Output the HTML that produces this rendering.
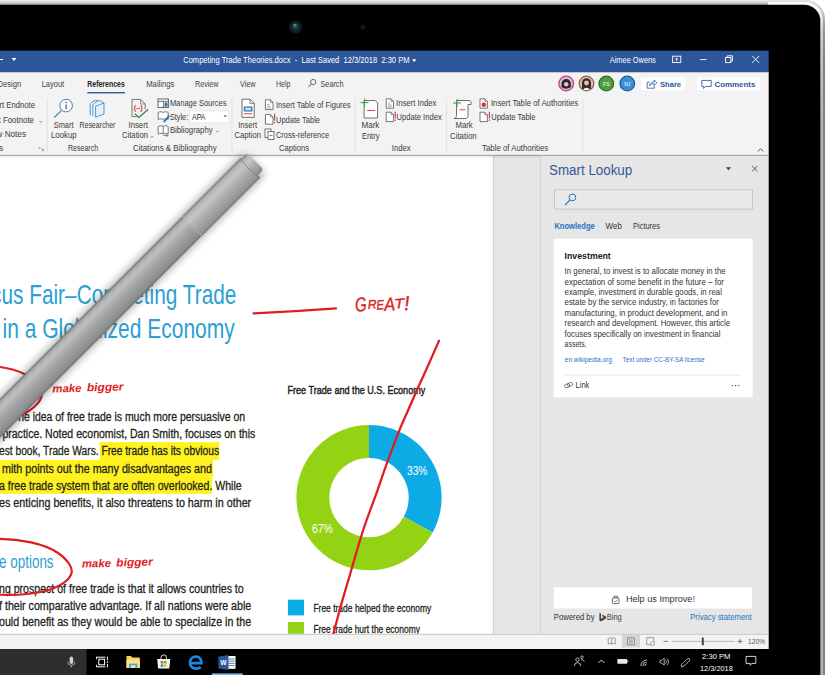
<!DOCTYPE html>
<html lang="en"><head><meta charset="utf-8"><title>Word - Smart Lookup</title>
<style>
html,body{margin:0;padding:0;background:#fff;}
body{width:825px;height:675px;overflow:hidden;}
svg{display:block;}
text{font-family:'Liberation Sans', sans-serif;}
</style></head><body>
<svg width="825" height="675" viewBox="0 0 825 675">
<defs>
<linearGradient id="topstrip" x1="0" y1="0" x2="0" y2="1"><stop offset="0" stop-color="#f0f0f0"/><stop offset="0.45" stop-color="#d2d2d2"/><stop offset="1" stop-color="#a6a6a6"/></linearGradient>
<linearGradient id="penbody" x1="0" y1="0" x2="0" y2="1">
<stop offset="0" stop-color="#6e6f71"/><stop offset="0.045" stop-color="#8f9092"/><stop offset="0.13" stop-color="#b3b4b6"/><stop offset="0.28" stop-color="#bebfc1"/><stop offset="0.45" stop-color="#aaabad"/><stop offset="0.7" stop-color="#98999b"/><stop offset="0.9" stop-color="#8b8c8e"/><stop offset="1" stop-color="#707173"/></linearGradient>
<linearGradient id="pencap" x1="0" y1="0" x2="0" y2="1">
<stop offset="0" stop-color="#7a7b7d"/><stop offset="0.05" stop-color="#9b9c9e"/><stop offset="0.15" stop-color="#bbbcbe"/><stop offset="0.32" stop-color="#c4c5c7"/><stop offset="0.5" stop-color="#b0b1b3"/><stop offset="0.75" stop-color="#9e9fa1"/><stop offset="0.92" stop-color="#909193"/><stop offset="1" stop-color="#757678"/></linearGradient>
<linearGradient id="rshadow" x1="0" y1="0" x2="0" y2="1"><stop offset="0" stop-color="#000" stop-opacity="0.10"/><stop offset="1" stop-color="#000" stop-opacity="0"/></linearGradient>
<linearGradient id="edgeL" gradientUnits="userSpaceOnUse" x1="0" y1="0" x2="0" y2="120"><stop offset="0" stop-color="#ffffff"/><stop offset="0.12" stop-color="#f2f2f2"/><stop offset="0.35" stop-color="#cfcfcf"/><stop offset="1" stop-color="#adadad"/></linearGradient>
<linearGradient id="edgeD" gradientUnits="userSpaceOnUse" x1="0" y1="0" x2="0" y2="60"><stop offset="0" stop-color="#e4e4e4"/><stop offset="0.2" stop-color="#c4c4c4"/><stop offset="0.5" stop-color="#949494"/><stop offset="1" stop-color="#808080"/></linearGradient>
<filter id="blur4" x="-20%" y="-100%" width="140%" height="300%"><feGaussianBlur stdDeviation="4"/></filter>
<filter id="blur2" x="-20%" y="-100%" width="140%" height="300%"><feGaussianBlur stdDeviation="2"/></filter>
<clipPath id="screen"><rect x="0" y="50.5" width="768.7" height="625"/></clipPath>
<clipPath id="docclip"><rect x="0" y="155" width="493" height="479"/></clipPath>
</defs>
<rect x="0.0" y="0.0" width="825.0" height="675.0" fill="#ffffff" />
<path d="M768,2.900 H804.200 A16.900,16.900 0 0 1 821.100,19.800 V675" fill="none" stroke="url(#edgeL)" stroke-width="2.600"/>
<path d="M768,0.700 H805 A18.800,18.800 0 0 1 823.800,19.500 V675" fill="none" stroke="url(#edgeD)" stroke-width="2.400"/>
<path d="M0,0 H768 V5 H0 Z" fill="url(#topstrip)"/>
<path d="M0,4.7 H804.3 A16,16 0 0 1 820.3,20.7 V675 H0 Z" fill="#000"/>
<circle cx="295.5" cy="27.2" r="6.6" fill="#14191b"/><circle cx="295.5" cy="27.2" r="4.2" fill="#0f2c2e"/><circle cx="295.2" cy="26" r="2.6" fill="#1f5557"/><circle cx="294.8" cy="25" r="1.1" fill="#5fa3a3"/>
<circle cx="362.9" cy="27.2" r="2.4" fill="#161616"/>
<rect x="0.0" y="50.7" width="768.7" height="21.5" fill="#2b579a" />
<rect x="0.0" y="72.2" width="768.7" height="83.0" fill="#f3f3f3" />
<line x1="0.0" y1="59.5" x2="3.0" y2="59.5" stroke="#fff" stroke-width="1" />
<path d="M11.5,58 h5 l-2.5,3 z" fill="#fff"/>
<text x="183.2" y="63.2" font-size="8.2" fill="#fff" textLength="226.3" lengthAdjust="spacingAndGlyphs">Competing Trade Theories.docx  -  Last Saved  12/3/2018  2:30 PM</text>
<path d="M412,59.3 h4.4 l-2.2,2.6 z" fill="#fff"/>
<text x="609.8" y="63.2" font-size="8.2" fill="#fff" textLength="46.0" lengthAdjust="spacingAndGlyphs">Aimee Owens</text>
<rect x="672.6" y="56.2" width="8.2" height="6.4" fill="none" stroke="#fff" stroke-width="0.9"/><path d="M676.7,61.5 v-3.4 m-1.6,1.5 l1.6,-1.6 l1.6,1.6" fill="none" stroke="#fff" stroke-width="0.8"/>
<line x1="700.0" y1="59.6" x2="706.4" y2="59.6" stroke="#fff" stroke-width="0.9" />
<rect x="725.6" y="57.4" width="5.2" height="5.2" fill="none" stroke="#fff" stroke-width="0.9"/><path d="M727.3,57.4 v-1.6 h5.2 v5.2 h-1.7" fill="none" stroke="#fff" stroke-width="0.9"/>
<path d="M752.2,55.9 l7,7 m0,-7 l-7,7" stroke="#fff" stroke-width="0.9" fill="none"/>
<text x="-2.5" y="87.0" font-size="8.4" fill="#444" textLength="23.8" lengthAdjust="spacingAndGlyphs">Design</text>
<text x="41.7" y="87.0" font-size="8.4" fill="#444" textLength="22.5" lengthAdjust="spacingAndGlyphs">Layout</text>
<text x="87.3" y="87.0" font-size="8.4" fill="#262626" textLength="37.5" lengthAdjust="spacingAndGlyphs" font-weight="bold">References</text>
<text x="146.2" y="87.0" font-size="8.4" fill="#444" textLength="28.3" lengthAdjust="spacingAndGlyphs">Mailings</text>
<text x="195.0" y="87.0" font-size="8.4" fill="#444" textLength="23.5" lengthAdjust="spacingAndGlyphs">Review</text>
<text x="240.0" y="87.0" font-size="8.4" fill="#444" textLength="15.6" lengthAdjust="spacingAndGlyphs">View</text>
<text x="276.0" y="87.0" font-size="8.4" fill="#444" textLength="14.5" lengthAdjust="spacingAndGlyphs">Help</text>
<rect x="87.3" y="92.0" width="37.7" height="1.4" fill="#2b579a" />
<circle cx="313.2" cy="82" r="2.6" fill="none" stroke="#444" stroke-width="0.8"/><path d="M311.3,84 l-3,3.2" stroke="#444" stroke-width="0.9"/>
<text x="320.5" y="87.0" font-size="8.4" fill="#444" textLength="23.0" lengthAdjust="spacingAndGlyphs">Search</text>
<circle cx="566.2" cy="83.5" r="7.3" fill="#c8c6d2" stroke="#d6338a" stroke-width="1.3"/><path d="M561.5,84 a4.7,5 0 0 1 9.4,0 v3 a8,8 0 0 1 -9.4,0 z" fill="#2a2230"/><circle cx="566.2" cy="84.3" r="2.3" fill="#e6c1ad"/>
<circle cx="586.5" cy="83.5" r="7.3" fill="#d9c3b0" stroke="#8a6a55" stroke-width="1.3"/><path d="M582,89 v-6 a4.5,4.8 0 0 1 9,0 v6 z" fill="#3b2a22"/><circle cx="586.5" cy="83" r="2.4" fill="#e8c4ae"/><path d="M583.3,90 a3.3,3 0 0 1 6.4,0 z" fill="#f1f1f1"/>
<circle cx="606.3" cy="83.5" r="7.3" fill="#4f9d3f" stroke="#2f6e27" stroke-width="1.3"/>
<text x="606.3" y="85.6" font-size="5" fill="#fff" text-anchor="middle">FS</text>
<circle cx="627.3" cy="83.5" r="7.3" fill="#3b8fd6" stroke="#1f5fa8" stroke-width="1.3"/>
<text x="627.3" y="85.6" font-size="5" fill="#fff" text-anchor="middle">NJ</text>
<rect x="641.2" y="77.6" width="44.3" height="12.6" fill="#fff" />
<path d="M649.8,82.2 h-2.6 v6 h7 v-2.4 M649.6,86 c0.4,-2.6 2,-4 4.6,-4.1 v-1.9 l2.8,2.8 l-2.8,2.8 v-1.9 c-2,0 -3.4,0.6 -4.6,2.3 z" fill="none" stroke="#2b579a" stroke-width="0.8"/>
<text x="659.9" y="87.2" font-size="8" fill="#2b579a" textLength="21.2" lengthAdjust="spacingAndGlyphs" font-weight="bold">Share</text>
<rect x="697.0" y="77.6" width="63.2" height="12.6" fill="#fff" />
<path d="M701.8,80.4 h9.4 v6 h-5.6 l-2,2 v-2 h-1.8 z" fill="none" stroke="#2b579a" stroke-width="0.85"/>
<text x="714.5" y="87.2" font-size="8" fill="#2b579a" textLength="40.8" lengthAdjust="spacingAndGlyphs" font-weight="bold">Comments</text>
<text x="-0.5" y="107.6" font-size="8.2" fill="#3a3a3a" textLength="35.5" lengthAdjust="spacingAndGlyphs">rt Endnote</text>
<text x="-1.5" y="122.8" font-size="8.2" fill="#3a3a3a" textLength="35.5" lengthAdjust="spacingAndGlyphs">t Footnote</text>
<path d="M39.4,121 l1.3,1.4 l1.3,-1.4" fill="none" stroke="#666" stroke-width="0.7"/>
<text x="-3.5" y="137.4" font-size="8.2" fill="#3a3a3a" textLength="29.5" lengthAdjust="spacingAndGlyphs">w Notes</text>
<text x="-1.0" y="151.2" font-size="8.2" fill="#3a3a3a">s</text>
<path d="M40.6,147.6 h-1.6 m0,0 v1.6 M43.6,150.6 v-2 m0,2 h-2 M41,148 l2.4,2.4" fill="none" stroke="#777" stroke-width="0.6"/>
<line x1="47.3" y1="98.0" x2="47.3" y2="152.5" stroke="#e0e0e0" stroke-width="0.9" />
<line x1="232.0" y1="98.0" x2="232.0" y2="152.5" stroke="#e0e0e0" stroke-width="0.9" />
<line x1="355.2" y1="98.0" x2="355.2" y2="152.5" stroke="#e0e0e0" stroke-width="0.9" />
<line x1="446.4" y1="98.0" x2="446.4" y2="152.5" stroke="#e0e0e0" stroke-width="0.9" />
<line x1="583.0" y1="98.0" x2="583.0" y2="152.5" stroke="#e0e0e0" stroke-width="0.9" />
<circle cx="66.1" cy="105.6" r="6.3" fill="#f9f9f9" stroke="#2e75b6" stroke-width="0.9"/><path d="M61.500,110.300 l-7.300,7.400" stroke="#2e75b6" stroke-width="1.1"/><path d="M66.100,104.400 v4.600" stroke="#5a3a2a" stroke-width="1.1"/><circle cx="66.100" cy="102.400" r="0.750" fill="#5a3a2a"/>
<text x="53.8" y="127.5" font-size="8.2" fill="#3a3a3a" textLength="19.7" lengthAdjust="spacingAndGlyphs">Smart</text>
<text x="51.0" y="137.9" font-size="8.2" fill="#3a3a3a" textLength="25.6" lengthAdjust="spacingAndGlyphs">Lookup</text>
<path d="M90.200,115.400 v-10.600 q0,-1.600 1.400,-2.400 l3.800,-2.200 M92.800,116.200 v-10.600 q0,-1.600 1.400,-2.400 l3.800,-2.200" fill="none" stroke="#2e86c9" stroke-width="0.85"/><path d="M95.600,106.200 l8.400,-3.200 v11 l-8.400,3.200 z" fill="#e7f1fa" stroke="#2e86c9" stroke-width="0.85" stroke-linejoin="round"/><path d="M95.400,100.200 l6,1 l2.600,1.800" fill="none" stroke="#2e86c9" stroke-width="0.8"/>
<text x="79.5" y="127.5" font-size="8.2" fill="#3a3a3a" textLength="35.9" lengthAdjust="spacingAndGlyphs">Researcher</text>
<text x="67.9" y="151.2" font-size="8.2" fill="#3a3a3a" textLength="30.3" lengthAdjust="spacingAndGlyphs">Research</text>
<path d="M132,99.400 h8.600 l4.600,4.600 v5.400 M132,99.400 v17.200 h4.600" fill="none" stroke="#666" stroke-width="0.9"/><path d="M140.600,99.400 v4.600 h4.600" fill="none" stroke="#666" stroke-width="0.7"/>
<text x="138.2" y="110.0" font-size="7.4" fill="#d13438" font-weight="bold" text-anchor="middle">(–)</text>
<path d="M134.800,113.600 l4,3.900 l9.300,-8" fill="none" stroke="#2e7d32" stroke-width="1.2"/>
<text x="128.5" y="127.5" font-size="8.2" fill="#3a3a3a" textLength="19.4" lengthAdjust="spacingAndGlyphs">Insert</text>
<text x="122.0" y="138.0" font-size="8.2" fill="#3a3a3a" textLength="26.0" lengthAdjust="spacingAndGlyphs">Citation</text>
<path d="M150.6,136 l1.3,1.4 l1.3,-1.4" fill="none" stroke="#666" stroke-width="0.7"/>
<rect x="158" y="99" width="10.4" height="8.4" fill="#fff" stroke="#555" stroke-width="0.9"/><path d="M158,101.4 h10.4 M163.6,101.4 v6" stroke="#555" stroke-width="0.8"/><rect x="164.6" y="102.6" width="3" height="4" fill="#2e75b6"/>
<text x="169.9" y="106.2" font-size="8.2" fill="#3a3a3a" textLength="56.5" lengthAdjust="spacingAndGlyphs">Manage Sources</text>
<path d="M158.2,112.5 c2,-1 3.5,-1 5,0 c1.5,-1 3,-1 5,0 v7 c-2,-1 -3.5,-1 -5,0 c-1.500,-1 -3,-1 -5,0 z" fill="#fff" stroke="#555" stroke-width="0.8"/><path d="M163,121.5 l5.600,-6.5 l1.4,1.2 l-5.600,6.500 z" fill="#2e75b6"/>
<text x="169.9" y="119.8" font-size="8.2" fill="#3a3a3a" textLength="18.3" lengthAdjust="spacingAndGlyphs">Style:</text>
<rect x="189.5" y="111.0" width="39.4" height="11.8" fill="#fff" stroke="#e0e0e0" stroke-width="0.6"/>
<text x="192.0" y="120.0" font-size="8.2" fill="#222" textLength="13.5" lengthAdjust="spacingAndGlyphs">APA</text>
<path d="M223.600,115.4 h3.2 l-1.600,1.8 z" fill="#444"/>
<path d="M158.2,126.5 c2,-1 3.5,-1 5,0 c1.500,-1 3,-1 5,0 v7.500 c-2,-1 -3.500,-1 -5,0 c-1.500,-1 -3,-1 -5,0 z M163.200,126.5 v7.500" fill="#fff" stroke="#555" stroke-width="0.8"/><path d="M163.500,135.500 h4.500 m-1.500,-1.500 l1.500,1.500 l-1.500,1.500" fill="none" stroke="#2e75b6" stroke-width="0.8"/>
<text x="169.9" y="133.3" font-size="8.2" fill="#3a3a3a" textLength="42.7" lengthAdjust="spacingAndGlyphs">Bibliography</text>
<path d="M216.2,130.8 l1.3,1.4 l1.3,-1.4" fill="none" stroke="#666" stroke-width="0.7"/>
<text x="133.0" y="151.2" font-size="8.2" fill="#3a3a3a" textLength="83.7" lengthAdjust="spacingAndGlyphs">Citations &amp; Bibliography</text>
<path d="M242,99.200 h8 l4.200,4.200 v14 h-12.200 z" fill="#fff" stroke="#555" stroke-width="0.85"/><path d="M250,99.200 v4.200 h4.200" fill="none" stroke="#555" stroke-width="0.7"/><rect x="243.800" y="106.500" width="8.600" height="5" fill="#2e75b6"/><rect x="245.200" y="107.700" width="5.800" height="2.600" fill="#cfe3f5"/><path d="M244,113.800 h8.200" stroke="#d13438" stroke-width="0.9"/>
<text x="238.3" y="127.7" font-size="8.2" fill="#3a3a3a" textLength="18.7" lengthAdjust="spacingAndGlyphs">Insert</text>
<text x="234.5" y="138.0" font-size="8.2" fill="#3a3a3a" textLength="26.5" lengthAdjust="spacingAndGlyphs">Caption</text>
<path d="M265.4,99.8 h5.0 l2.6,2.6 v7.200000000000001 h-7.6 z" fill="#fff" stroke="#555" stroke-width="0.8"/><path d="M270.4,99.8 v2.6 h2.6" fill="none" stroke="#555" stroke-width="0.6"/>
<path d="M267,104.500 h2.500 M267,106.300 h4 M267,108 h4" stroke="#777" stroke-width="0.6"/>
<text x="276.0" y="107.8" font-size="8.2" fill="#3a3a3a" textLength="74.6" lengthAdjust="spacingAndGlyphs">Insert Table of Figures</text>
<path d="M265.4,114.4 h5.0 l2.6,2.6 v7.200000000000001 h-7.6 z" fill="#fff" stroke="#555" stroke-width="0.8"/><path d="M270.4,114.4 v2.6 h2.6" fill="none" stroke="#555" stroke-width="0.6"/>
<path d="M274.600,113.800 v7" stroke="#d13438" stroke-width="1.1"/><circle cx="274.600" cy="122.600" r="0.700" fill="#d13438"/>
<text x="276.0" y="122.6" font-size="8.2" fill="#3a3a3a" textLength="44.0" lengthAdjust="spacingAndGlyphs">Update Table</text>
<rect x="265" y="129" width="6" height="8.500" fill="#fff" stroke="#555" stroke-width="0.8"/><rect x="268" y="131.500" width="6" height="8" fill="#fff" stroke="#555" stroke-width="0.8"/><path d="M269.500,135.500 h3" stroke="#d13438" stroke-width="0.8"/>
<text x="276.0" y="137.6" font-size="8.2" fill="#3a3a3a" textLength="53.0" lengthAdjust="spacingAndGlyphs">Cross-reference</text>
<text x="279.0" y="151.2" font-size="8.2" fill="#3a3a3a" textLength="30.0" lengthAdjust="spacingAndGlyphs">Captions</text>
<path d="M364.1,100.5 h11 l2.500,2.500 v15 h-13.500 z" fill="#fff" stroke="#555" stroke-width="0.85"/><path d="M360.6,102.6 h8 M364.6,98.6 v8" stroke="#3a9a3a" stroke-width="1"/><path d="M367.1,110.5 h8" stroke="#d13438" stroke-width="0.9"/>
<text x="361.5" y="127.9" font-size="8.2" fill="#3a3a3a" textLength="17.9" lengthAdjust="spacingAndGlyphs">Mark</text>
<text x="362.0" y="138.5" font-size="8.2" fill="#3a3a3a" textLength="17.4" lengthAdjust="spacingAndGlyphs">Entry</text>
<path d="M386.2,98.8 h4.800000000000001 l2.6,2.6 v6.800000000000001 h-7.4 z" fill="#fff" stroke="#555" stroke-width="0.8"/><path d="M390.99999999999994,98.8 v2.6 h2.6" fill="none" stroke="#555" stroke-width="0.6"/>
<path d="M388,103 h2 M388,104.800 h3.600 M388,106.400 h3.600" stroke="#777" stroke-width="0.6"/>
<text x="396.0" y="106.0" font-size="8.2" fill="#3a3a3a" textLength="40.4" lengthAdjust="spacingAndGlyphs">Insert Index</text>
<path d="M386.2,112.2 h4.800000000000001 l2.6,2.6 v6.800000000000001 h-7.4 z" fill="#fff" stroke="#555" stroke-width="0.8"/><path d="M390.99999999999994,112.2 v2.6 h2.6" fill="none" stroke="#555" stroke-width="0.6"/>
<path d="M395.200,111.800 v6.600" stroke="#d13438" stroke-width="1.1"/><circle cx="395.200" cy="120.200" r="0.700" fill="#d13438"/>
<text x="396.4" y="119.7" font-size="8.2" fill="#3a3a3a" textLength="45.4" lengthAdjust="spacingAndGlyphs">Update Index</text>
<text x="391.8" y="151.2" font-size="8.2" fill="#3a3a3a" textLength="18.8" lengthAdjust="spacingAndGlyphs">Index</text>
<path d="M457,100.500 h12 c1.500,0 2,1 2,2 v2 h-3 v11 c0,2 -1,3 -2.500,3 h-11.500 c1.500,0 2.500,-1 2.500,-3 v-13 c0,-1 0,-2 0.500,-2 z" fill="#fff" stroke="#555" stroke-width="0.85"/><path d="M453,103 h8 M457,99 v8" stroke="#3a9a3a" stroke-width="1"/><path d="M459.500,109.800 h6" stroke="#d13438" stroke-width="0.9"/>
<text x="455.5" y="127.9" font-size="8.2" fill="#3a3a3a" textLength="17.2" lengthAdjust="spacingAndGlyphs">Mark</text>
<text x="450.0" y="138.5" font-size="8.2" fill="#3a3a3a" textLength="26.7" lengthAdjust="spacingAndGlyphs">Citation</text>
<path d="M480,98.8 h4.800000000000001 l2.6,2.6 v6.800000000000001 h-7.4 z" fill="#fff" stroke="#555" stroke-width="0.8"/><path d="M484.79999999999995,98.8 v2.6 h2.6" fill="none" stroke="#555" stroke-width="0.6"/>
<circle cx="483.800" cy="104.800" r="2.300" fill="#d13438"/>
<text x="490.9" y="106.0" font-size="8.2" fill="#3a3a3a" textLength="87.3" lengthAdjust="spacingAndGlyphs">Insert Table of Authorities</text>
<path d="M480,112.2 h4.800000000000001 l2.6,2.6 v6.800000000000001 h-7.4 z" fill="#fff" stroke="#555" stroke-width="0.8"/><path d="M484.79999999999995,112.2 v2.6 h2.6" fill="none" stroke="#555" stroke-width="0.6"/>
<path d="M489.400,111.800 v6.600" stroke="#d13438" stroke-width="1.1"/><circle cx="489.400" cy="120.200" r="0.700" fill="#d13438"/>
<text x="491.2" y="119.7" font-size="8.2" fill="#3a3a3a" textLength="44.3" lengthAdjust="spacingAndGlyphs">Update Table</text>
<text x="482.0" y="151.2" font-size="8.2" fill="#3a3a3a" textLength="66.3" lengthAdjust="spacingAndGlyphs">Table of Authorities</text>
<path d="M757.800,151.500 l2.800,-2.800 l2.800,2.800" fill="none" stroke="#444" stroke-width="0.9"/>
<line x1="0.0" y1="154.8" x2="768.7" y2="154.8" stroke="#d4d4d4" stroke-width="0.8" />
<rect x="0.0" y="155.4" width="493.1" height="479.0" fill="#ffffff" />
<rect x="493.1" y="155.4" width="48.0" height="479.0" fill="#e6e6e6" />
<line x1="493.3" y1="155.4" x2="493.3" y2="634.0" stroke="#d2d2d2" stroke-width="0.7" />
<rect x="0.0" y="155.2" width="768.7" height="3.5" fill="url(#rshadow)" />
<g clip-path="url(#docclip)">
<text x="-9.0" y="304.0" font-size="27.8" fill="#2d9fd2" textLength="245.4" lengthAdjust="spacingAndGlyphs">cus Fair–Competing Trade</text>
<text x="2.5" y="337.6" font-size="27.8" fill="#2d9fd2" textLength="232.3" lengthAdjust="spacingAndGlyphs">in a Globalized Economy</text>
<rect x="99.7" y="442.1" width="119.5" height="18.0" fill="#fff21f" />
<rect x="0.0" y="460.0" width="213.0" height="17.2" fill="#fff21f" />
<rect x="0.0" y="477.0" width="212.0" height="16.8" fill="#fff21f" />
<text x="11.8" y="421.4" font-size="12" fill="#231f20" textLength="233.2" lengthAdjust="spacingAndGlyphs" stroke="#231f20" stroke-width="0.28">The idea of free trade is much more persuasive on</text>
<text x="2.4" y="437.7" font-size="12" fill="#231f20" textLength="252.9" lengthAdjust="spacingAndGlyphs" stroke="#231f20" stroke-width="0.28">practice. Noted economist, Dan Smith, focuses on this</text>
<text x="-1.0" y="454.8" font-size="12" fill="#231f20" textLength="220.0" lengthAdjust="spacingAndGlyphs" stroke="#231f20" stroke-width="0.28">est book, Trade Wars. Free trade has its obvious</text>
<text x="2.0" y="473.0" font-size="12" fill="#231f20" textLength="210.0" lengthAdjust="spacingAndGlyphs" stroke="#231f20" stroke-width="0.28">mith points out the many disadvantages and</text>
<text x="-1.0" y="490.2" font-size="12" fill="#231f20" textLength="242.7" lengthAdjust="spacingAndGlyphs" stroke="#231f20" stroke-width="0.28">a free trade system that are often overlooked. While</text>
<text x="-1.0" y="507.4" font-size="12" fill="#231f20" textLength="252.2" lengthAdjust="spacingAndGlyphs" stroke="#231f20" stroke-width="0.28">es enticing benefits, it also threatens to harm in other</text>
<text x="-1.0" y="567.5" font-size="18.5" fill="#2d9fd2" textLength="54.6" lengthAdjust="spacingAndGlyphs">e options</text>
<text x="-1.0" y="593.0" font-size="12" fill="#231f20" textLength="244.7" lengthAdjust="spacingAndGlyphs" stroke="#231f20" stroke-width="0.28">ng prospect of free trade is that it allows countries to</text>
<text x="-1.0" y="610.0" font-size="12" fill="#231f20" textLength="252.2" lengthAdjust="spacingAndGlyphs" stroke="#231f20" stroke-width="0.28">f their comparative advantage. If all nations were able</text>
<text x="-1.0" y="626.2" font-size="12" fill="#231f20" textLength="252.2" lengthAdjust="spacingAndGlyphs" stroke="#231f20" stroke-width="0.28">ould benefit as they would be able to specialize in the</text>
<text x="287.5" y="393.9" font-size="11.5" fill="#231f20" textLength="137.8" lengthAdjust="spacingAndGlyphs" stroke="#231f20" stroke-width="0.45">Free Trade and the U.S. Economy</text>
<path d="M369.00,425.00 A72.6,72.6 0 0 1 432.62,532.58 L403.79,516.73 A39.7,39.7 0 0 0 369.00,457.90 Z" fill="#0dabe6"/>
<path d="M432.62,532.58 A72.6,72.6 0 1 1 369.00,425.00 L369.00,457.90 A39.7,39.7 0 1 0 403.79,516.73 Z" fill="#94d214"/>
<text x="407.0" y="474.8" font-size="12.5" fill="#fff" textLength="20.4" lengthAdjust="spacingAndGlyphs">33%</text>
<text x="311.9" y="532.5" font-size="12.5" fill="#fff" textLength="21.1" lengthAdjust="spacingAndGlyphs">67%</text>
<rect x="287.9" y="599.7" width="16.1" height="15.7" fill="#0dabe6" />
<text x="313.4" y="611.5" font-size="10.5" fill="#231f20" textLength="117.9" lengthAdjust="spacingAndGlyphs" stroke="#231f20" stroke-width="0.28">Free trade helped the economy</text>
<rect x="287.9" y="622.0" width="16.1" height="15.0" fill="#94d214" />
<text x="313.4" y="632.7" font-size="10.5" fill="#231f20" textLength="106.5" lengthAdjust="spacingAndGlyphs" stroke="#231f20" stroke-width="0.28">Free trade hurt the economy</text>
</g>
<rect x="540.3" y="155.4" width="228.4" height="479.0" fill="#e6e6e6" />
<line x1="540.3" y1="155.4" x2="540.3" y2="634.0" stroke="#cfcfcf" stroke-width="0.9" />
<text x="549.1" y="174.7" font-size="15.2" fill="#34589b" textLength="83.1" lengthAdjust="spacingAndGlyphs">Smart Lookup</text>
<path d="M725.800,167.200 h5.400 l-2.700,3 z" fill="#444"/>
<path d="M752.200,166 l5.200,5.200 m0,-5.200 l-5.200,5.200" stroke="#444" stroke-width="0.9" fill="none"/>
<rect x="554.4" y="189.8" width="198.2" height="19.3" fill="#e9e9e9" stroke="#bdbdbd" stroke-width="0.8"/>
<circle cx="572.400" cy="197.400" r="3.400" fill="none" stroke="#2b6cb5" stroke-width="1"/><path d="M570,199.900 l-5,5.200" stroke="#2b6cb5" stroke-width="1.1"/>
<text x="554.4" y="228.9" font-size="8.2" fill="#1f74c0" textLength="40.4" lengthAdjust="spacingAndGlyphs" font-weight="bold">Knowledge</text>
<text x="605.6" y="228.9" font-size="8.2" fill="#333" textLength="16.3" lengthAdjust="spacingAndGlyphs">Web</text>
<text x="633.0" y="228.9" font-size="8.2" fill="#333" textLength="27.0" lengthAdjust="spacingAndGlyphs">Pictures</text>
<rect x="553.6" y="238.8" width="199.0" height="158.6" fill="#fff" />
<text x="564.6" y="258.7" font-size="9.2" fill="#1a1a1a" textLength="46.2" lengthAdjust="spacingAndGlyphs" font-weight="bold">Investment</text>
<text x="564.6" y="274.1" font-size="8.2" fill="#333" textLength="161.0" lengthAdjust="spacingAndGlyphs">In general, to invest is to allocate money in the</text>
<text x="564.6" y="284.5" font-size="8.2" fill="#333" textLength="159.4" lengthAdjust="spacingAndGlyphs">expectation of some benefit in the future – for</text>
<text x="564.6" y="294.9" font-size="8.2" fill="#333" textLength="157.3" lengthAdjust="spacingAndGlyphs">example, investment in durable goods, in real</text>
<text x="564.6" y="305.3" font-size="8.2" fill="#333" textLength="154.3" lengthAdjust="spacingAndGlyphs">estate by the service industry, in factories for</text>
<text x="564.6" y="315.7" font-size="8.2" fill="#333" textLength="162.8" lengthAdjust="spacingAndGlyphs">manufacturing, in product development, and in</text>
<text x="564.6" y="326.2" font-size="8.2" fill="#333" textLength="165.4" lengthAdjust="spacingAndGlyphs">research and development. However, this article</text>
<text x="564.6" y="336.6" font-size="8.2" fill="#333" textLength="155.8" lengthAdjust="spacingAndGlyphs">focuses specifically on investment in financial</text>
<text x="564.6" y="347.0" font-size="8.2" fill="#333" textLength="22.1" lengthAdjust="spacingAndGlyphs">assets.</text>
<text x="564.8" y="362.3" font-size="6.9" fill="#1f74c0" textLength="47.1" lengthAdjust="spacingAndGlyphs">en.wikipedia.org</text>
<text x="622.6" y="362.3" font-size="6.9" fill="#1f74c0" textLength="81.8" lengthAdjust="spacingAndGlyphs">Text under CC-BY-SA license</text>
<line x1="564.6" y1="375.2" x2="741.5" y2="375.2" stroke="#e3e3e3" stroke-width="0.8" />
<g transform="translate(568.6,385.1) rotate(-22)" fill="none" stroke="#555" stroke-width="0.75"><rect x="-4.2" y="-1.700" width="5.200" height="3.400" rx="1.700"/><rect x="-1" y="-1.700" width="5.200" height="3.400" rx="1.700"/></g>
<text x="575.6" y="387.6" font-size="8.2" fill="#333" textLength="13.7" lengthAdjust="spacingAndGlyphs">Link</text>
<circle cx="732.4" cy="385.600" r="0.700" fill="#333"/>
<circle cx="735.6" cy="385.600" r="0.700" fill="#333"/>
<circle cx="738.8" cy="385.600" r="0.700" fill="#333"/>
<rect x="553.8" y="587.3" width="198.2" height="21.2" fill="#fff" />
<rect x="612.400" y="598" width="6.600" height="5.600" rx="0.800" fill="none" stroke="#444" stroke-width="0.8"/><path d="M614,598 v-1.800 h3.400 v1.800" fill="none" stroke="#444" stroke-width="0.8"/><path d="M614.200,600.800 l1.200,1.200 l2,-2.200" fill="none" stroke="#444" stroke-width="0.7"/>
<text x="625.9" y="601.6" font-size="9.2" fill="#333" textLength="69.1" lengthAdjust="spacingAndGlyphs">Help us Improve<tspan fill="#1e6fb8">!</tspan></text>
<text x="553.8" y="619.9" font-size="8.2" fill="#333" textLength="40.7" lengthAdjust="spacingAndGlyphs">Powered by</text>
<path d="M599.400,613 l1.600,0.600 v5.200 l3,-1.700 l-1.500,-0.700 l-0.700,-1.700 l4.200,1.500 v2.400 l-5,2.900 l-1.600,-1 z" fill="#444"/>
<text x="606.7" y="619.9" font-size="8.4" fill="#444" textLength="15.1" lengthAdjust="spacingAndGlyphs">Bing</text>
<text x="690.2" y="619.9" font-size="8.2" fill="#1f74c0" textLength="61.5" lengthAdjust="spacingAndGlyphs">Privacy statement</text>
<rect x="0.0" y="634.3" width="768.7" height="14.7" fill="#f3f3f3" />
<line x1="0.0" y1="634.0" x2="768.7" y2="634.0" stroke="#dcdcdc" stroke-width="0.8" />
<rect x="621.8" y="635.0" width="18.2" height="12.5" fill="#d4d4d4" />
<path d="M608.200,638.400 c1.400,-0.800 2.400,-0.800 3.500,0 c1.100,-0.800 2.100,-0.800 3.500,0 v5.600 c-1.400,-0.800 -2.400,-0.800 -3.500,0 c-1.100,-0.800 -2.100,-0.800 -3.500,0 z M611.700,638.400 v5.600" fill="none" stroke="#777" stroke-width="0.7"/>
<rect x="627.400" y="637.800" width="7" height="7" fill="none" stroke="#777" stroke-width="0.7"/><path d="M629,640 h3.800 M629,641.400 h3.800 M629,642.800 h3.800" stroke="#777" stroke-width="0.5"/>
<rect x="646.800" y="637.800" width="7" height="7" fill="none" stroke="#777" stroke-width="0.7"/><circle cx="652.500" cy="643.500" r="2" fill="#f3f3f3" stroke="#777" stroke-width="0.6"/>
<line x1="663.6" y1="641.4" x2="668.0" y2="641.4" stroke="#555" stroke-width="0.8" />
<line x1="671.5" y1="641.4" x2="734.6" y2="641.4" stroke="#999" stroke-width="0.7" />
<rect x="701.8" y="637.6" width="2.0" height="7.6" fill="#444" />
<path d="M737.600,641.400 h4.600 M739.900,639.100 v4.600" stroke="#555" stroke-width="0.8"/>
<text x="748.0" y="643.7" font-size="6.6" fill="#555" textLength="17.0" lengthAdjust="spacingAndGlyphs">120%</text>
<path d="M25,634 v2 M82,634 v2 M130,634 v2 M252,634 v2" stroke="#c8c8c8" stroke-width="0.6"/>
<rect x="0.0" y="649.0" width="768.7" height="26.0" fill="#000000" />
<rect x="0.0" y="649.0" width="86.5" height="26.0" fill="#2e2e2e" />
<rect x="69.600" y="656.600" width="3.600" height="7.400" rx="1.800" fill="#cfcfcf"/><path d="M67.800,661.800 a3.600,3.600 0 0 0 7.200,0 M71.400,665.400 v2.200" fill="none" stroke="#cfcfcf" stroke-width="0.7"/>
<rect x="98.800" y="659.200" width="5.800" height="5.600" fill="none" stroke="#fff" stroke-width="1"/><path d="M96,657.200 h9.400 M96,666.800 h9.400 M96.500,657.200 v2 M96.500,666.800 v-2 M107.400,656.600 v3.600 M107.400,663.800 v3.600" stroke="#fff" stroke-width="1" fill="none"/><rect x="106.800" y="661.300" width="1.300" height="1.400" fill="#fff"/>
<path d="M126.500,656 h4.500 l1.200,1.400 h7.600 v10.600 h-13.300 z" fill="#f7d261"/><path d="M126.500,659.600 h13.300 v8.400 h-13.300 z" fill="#fbe28a"/><rect x="129" y="663.600" width="8.300" height="4.400" fill="#4aa3e0"/><rect x="131" y="665.200" width="4.300" height="2.800" fill="#fbe28a"/>
<path d="M157.200,659 h13 l-0.900,9.600 h-11.200 z" fill="#f5f5f5"/><path d="M161,659 v-1.400 a2.700,2.700 0 0 1 5.400,0 v1.400" fill="none" stroke="#f5f5f5" stroke-width="0.9"/><rect x="160.700" y="661" width="2.600" height="2.600" fill="#f25022"/><rect x="164" y="661" width="2.600" height="2.600" fill="#7fba00"/><rect x="160.700" y="664.300" width="2.600" height="2.600" fill="#00a4ef"/><rect x="164" y="664.300" width="2.600" height="2.600" fill="#ffb900"/>
<path d="M190.800,663.200 h10.600 c0.200,-4 -2,-6.600 -5.400,-6.600 c-3.600,0 -6,2.800 -6,6.200 c0,3.600 2.600,5.800 6,5.800 c1.800,0 3.400,-0.500 4.800,-1.400" fill="none" stroke="#1e88e0" stroke-width="2.700"/>
<rect x="226" y="656" width="9.500" height="12.800" fill="#fff"/><path d="M228.500,659 h6 M228.500,661.200 h6 M228.500,663.400 h6 M228.500,665.600 h6" stroke="#2b579a" stroke-width="0.8"/><path d="M218.500,656.600 l10,-1.600 v15 l-10,-1.600 z" fill="#2b579a"/>
<text x="223.5" y="665.4" font-size="6.4" fill="#fff" font-weight="bold" text-anchor="middle">W</text>
<rect x="211.8" y="673.4" width="31.0" height="1.6" fill="#76b9ed" />
<circle cx="577.500" cy="659.600" r="1.700" fill="none" stroke="#e8e8e8" stroke-width="0.8"/><path d="M574.400,666 a3.100,3.400 0 0 1 6.200,0" fill="none" stroke="#e8e8e8" stroke-width="0.8"/><circle cx="582" cy="657.200" r="1.300" fill="none" stroke="#e8e8e8" stroke-width="0.7"/><path d="M581,660 a2.300,2.300 0 0 1 3.300,1.800" fill="none" stroke="#e8e8e8" stroke-width="0.7"/>
<path d="M598.400,663 l3,-3 l3,3" fill="none" stroke="#e8e8e8" stroke-width="0.9"/>
<rect x="617.400" y="659" width="9.600" height="4.800" rx="0.600" fill="#e8e8e8"/><rect x="627.200" y="660.400" width="1" height="2" fill="#e8e8e8"/>
<path d="M640.800,666 a6,6 0 0 1 6,-6 M642.800,666 a4,4 0 0 1 4,-4 M644.800,666 a2,2 0 0 1 2,-2" fill="none" stroke="#e8e8e8" stroke-width="0.8"/>
<path d="M660,660.400 h1.800 l2.400,-2.200 v7 l-2.400,-2.200 h-1.800 z" fill="none" stroke="#e8e8e8" stroke-width="0.7"/><path d="M665.600,659.800 a2.600,2.600 0 0 1 0,3.800 M667,658.400 a4.400,4.400 0 0 1 0,6.600" fill="none" stroke="#e8e8e8" stroke-width="0.7"/>
<path d="M681.800,667 c-1.400,-1.400 0.400,-3.600 2,-4.800 c1.600,-1.400 4.400,-4.600 5.600,-3.400 c1.200,1.200 -1.400,3.400 -2.800,4.800 c-1.400,1.400 -3.400,3 -4.800,3.400 z" fill="none" stroke="#e8e8e8" stroke-width="0.8"/>
<text x="702.0" y="659.4" font-size="7.8" fill="#fff" textLength="28.5" lengthAdjust="spacingAndGlyphs">2:30 PM</text>
<text x="700.0" y="670.9" font-size="7.8" fill="#fff" textLength="32.8" lengthAdjust="spacingAndGlyphs">12/3/2018</text>
<path d="M746,656.400 h9.800 v7 h-3.800 l-1.800,1.800 v-1.800 h-4.200 z" fill="none" stroke="#e8e8e8" stroke-width="0.9"/>
<g clip-path="url(#docclip)" fill="none" stroke="#e11b22" stroke-width="2.25" stroke-linecap="round">
<path d="M439.0,340.7 C437.1,345.1 431.1,358.8 427.4,367.0 C423.7,375.2 420.1,383.1 417.0,390.0 C413.9,396.9 411.8,401.8 408.9,408.5 C406.0,415.2 403.1,421.1 399.5,430.0 C395.9,438.9 391.3,451.3 387.4,461.9 C383.5,472.5 380.3,482.3 376.3,493.7 C372.3,505.1 367.2,517.8 363.2,530.0 C359.2,542.2 355.6,555.4 352.2,567.0 C348.8,578.6 345.6,589.1 342.6,599.6 C339.6,610.1 336.0,623.9 334.4,630.0 C332.8,636.1 333.1,635.4 332.8,636.5"/>
<path d="M253.600,313.400 Q295,311.500 336,308.400"/>
<path d="M-5,366.500 C15,368 42,378 42,393 C42,403 30,412 15,418" stroke-width="2.2"/>
<path d="M-5,538.800 C20,538.500 45,544 58,553 C68,560 73,568 71.500,573 C70,580 60,587 45,591 C30,594.500 12,595.500 -5,594.500" stroke-width="2.2"/>
</g>
<text font-size="11.2" fill="#e11b22" font-weight="bold" font-style="italic" transform="rotate(-1.5 52.6 392.5)"><tspan x="52.6" y="392.5" textLength="29" lengthAdjust="spacingAndGlyphs">make</tspan> <tspan x="87.0" y="392.2" textLength="36.5" lengthAdjust="spacingAndGlyphs">bigger</tspan></text>
<text font-size="11.2" fill="#e11b22" font-weight="bold" font-style="italic" transform="rotate(-1.5 82 567.6)"><tspan x="82" y="567.6" textLength="29" lengthAdjust="spacingAndGlyphs">make</tspan> <tspan x="116.4" y="567.3000000000001" textLength="36.5" lengthAdjust="spacingAndGlyphs">bigger</tspan></text>
<text fill="#e11b22" font-style="italic" stroke="#e11b22" stroke-width="0.35" transform="rotate(-4 380 305)"><tspan x="355.2" y="310" font-size="20" textLength="11.5" lengthAdjust="spacingAndGlyphs">G</tspan><tspan x="367.8" y="308.2" font-size="12.5">R</tspan><tspan x="376.4" y="309.4" font-size="13.5" textLength="7.5" lengthAdjust="spacingAndGlyphs">E</tspan><tspan x="384" y="311.400" font-size="18.5" textLength="11" lengthAdjust="spacingAndGlyphs">A</tspan><tspan x="394.2" y="309.4" font-size="13.5" textLength="10" lengthAdjust="spacingAndGlyphs">T</tspan><tspan x="404" y="312" font-size="20">!</tspan></text>
<g clip-path="url(#screen)">
<g transform="translate(256.1,162.1) rotate(135) scale(1,-1)">
<rect x="2" y="-14.8" width="440" height="29.6" rx="5" fill="#000" opacity="0.38" filter="url(#blur4)"/>
<rect x="8" y="-13.8" width="440" height="27.6" fill="url(#penbody)"/>
<rect x="8" y="-13.8" width="82" height="27.6" fill="url(#pencap)"/>
<path d="M0,-9.3 Q0,-12.600000000000001 3,-12.600000000000001 H9 V10.200000000000001 H3 Q0,10.200000000000001 0,7.300000000000001 Z" fill="url(#pencap)"/>
<path d="M9,-13.8 Q11,0 9,13.8" fill="none" stroke="#7d7e80" stroke-width="0.8"/>
<path d="M90,-13.8 Q93,0 90,13.8" fill="none" stroke="#c6c7c9" stroke-width="1" opacity="0.5"/>
</g></g>
</svg>
</body></html>
